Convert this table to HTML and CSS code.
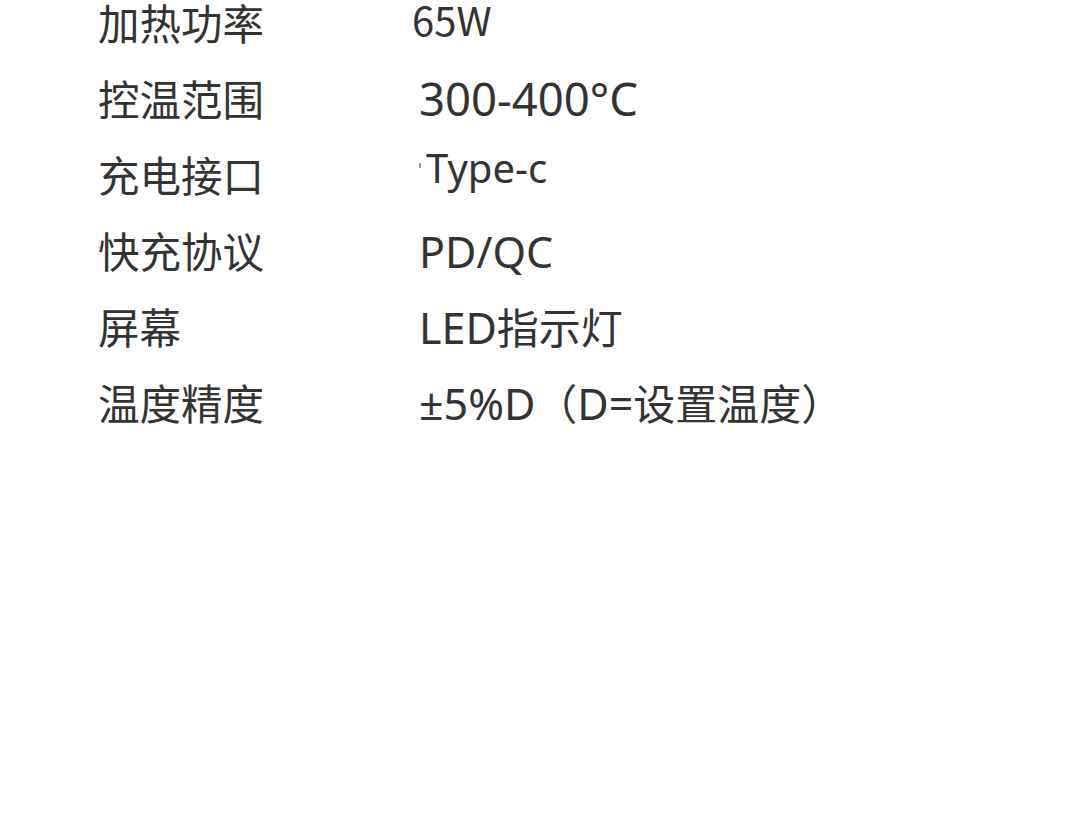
FILE: index.html
```html
<!DOCTYPE html>
<html lang="zh-CN">
<head>
    <meta charset="UTF-8">
    <meta name="viewport" content="width=device-width, initial-scale=1.0">
    <title>产品参数</title>
    <link rel="stylesheet" href="styles.css">
</head>
<body>
    <div class="spec-list">
        <div class="spec-row first">
            <div class="spec-label">加热功率</div>
            <div class="spec-value power">65W</div>
        </div>
        <div class="spec-row">
            <div class="spec-label">控温范围</div>
            <div class="spec-value range">300-400°C</div>
        </div>
        <div class="spec-row">
            <div class="spec-label">充电接口</div>
            <div class="spec-value port"><span class="tick"></span>Type-c</div>
        </div>
        <div class="spec-row">
            <div class="spec-label">快充协议</div>
            <div class="spec-value">PD/QC</div>
        </div>
        <div class="spec-row">
            <div class="spec-label">屏幕</div>
            <div class="spec-value">LED<span class="cjk">指示灯</span></div>
        </div>
        <div class="spec-row">
            <div class="spec-label">温度精度</div>
            <div class="spec-value accuracy">±5%D<span class="cjk">（</span>D=<span class="cjk">设置温度）</span></div>
        </div>
    </div>
</body>
</html>
```

FILE: styles.css
```css
* {
    margin: 0;
    padding: 0;
    box-sizing: border-box;
}

body {
    font-family: "Noto Sans CJK SC", "Noto Sans", sans-serif;
    background: #ffffff;
    color: #333333;
    width: 1080px;
    height: 825px;
    overflow: hidden;
}

.spec-list {
    padding-left: 98px;
}

.spec-row {
    display: flex;
    align-items: baseline;
    height: 76px;
    line-height: 76px;
}

/* first row is cut by the top edge, keep the same baseline without overflowing */
.spec-row.first {
    height: 60px;
    line-height: 44px;
}

.spec-label {
    width: 321px;
    flex-shrink: 0;
    font-size: 41.5px;
}

.spec-value {
    font-family: "Noto Sans", "Noto Sans CJK SC", sans-serif;
    font-size: 43px;
    white-space: nowrap;
}

.spec-value .cjk {
    font-family: "Noto Sans CJK SC", sans-serif;
    font-size: 42px;
}

.spec-value.power {
    align-self: flex-start;
    font-family: "Noto Sans CJK SC", sans-serif;
    font-size: 40px;
    line-height: 39px;
    margin-left: -7px;
}

.spec-value.range {
    font-size: 45.5px;
}

.spec-value.port {
    align-self: flex-start;
    font-size: 40px;
    line-height: 63px;
}

.tick {
    display: inline-block;
    width: 2px;
    height: 5px;
    background: #9a9a9a;
    margin-right: 5px;
    vertical-align: 15px;
}
```
